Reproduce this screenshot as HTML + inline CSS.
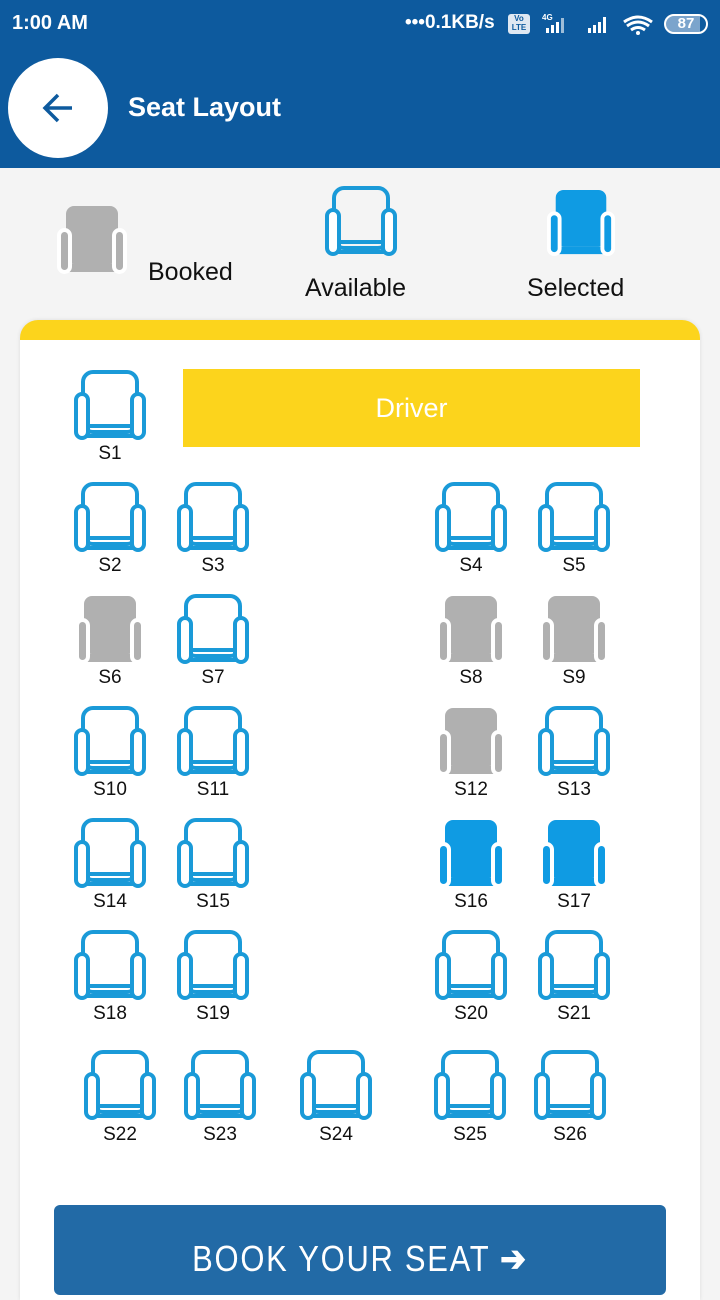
<!DOCTYPE html>
<html><head><meta charset="utf-8"><style>
*{margin:0;padding:0;box-sizing:border-box}
body{width:720px;height:1280px;overflow:hidden;background:#f4f4f4;font-family:"Liberation Sans",Arial,sans-serif;position:relative}
.abs{position:absolute}
.seat{position:absolute;width:72px;height:72px}
.lbl{position:absolute;width:80px;text-align:center;font-size:19px;color:#111}
</style></head><body>
<svg width="0" height="0" style="position:absolute">
<defs>
<g id="av">
<rect x="9" y="2" width="54" height="60" rx="10" fill="none" stroke="#1a9ad8" stroke-width="4"/>
<rect x="14" y="56" width="44" height="10" fill="none" stroke="#1a9ad8" stroke-width="4"/>
<rect x="2" y="24" width="12" height="44" rx="6" fill="#fff" stroke="#1a9ad8" stroke-width="4"/>
<rect x="58" y="24" width="12" height="44" rx="6" fill="#fff" stroke="#1a9ad8" stroke-width="4"/>
</g>
<g id="bk">
<rect x="10" y="2" width="52" height="58" rx="8" fill="#b0b0b0"/>
<rect x="13" y="60" width="46" height="8" fill="#b0b0b0"/>
<rect x="3" y="26" width="11" height="42" rx="5.5" fill="#b0b0b0" stroke="#fff" stroke-width="4"/>
<rect x="58" y="26" width="11" height="42" rx="5.5" fill="#b0b0b0" stroke="#fff" stroke-width="4"/>
</g>
<g id="sl">
<rect x="10" y="2" width="52" height="58" rx="8" fill="#0f9be3"/>
<rect x="13" y="60" width="46" height="8" fill="#0f9be3"/>
<rect x="3" y="26" width="11" height="42" rx="5.5" fill="#0f9be3" stroke="#fff" stroke-width="4"/>
<rect x="58" y="26" width="11" height="42" rx="5.5" fill="#0f9be3" stroke="#fff" stroke-width="4"/>
</g>
</defs></svg>

<div class="abs" style="left:0;top:0;width:720px;height:168px;background:#0d5a9e"></div>
<div class="abs" style="left:12px;top:12px;color:#fff;font-size:20px;font-weight:bold">1:00 AM</div>
<div class="abs" style="left:405px;top:12px;color:#fff;font-size:19px;font-weight:bold">•••0.1KB/s</div>
<div class="abs" style="left:508px;top:14px;width:22px;height:20px;background:#dfe8f2;border-radius:3px;font-size:8px;color:#0d5a9e;text-align:center;line-height:9px;font-weight:bold">Vo<br>LTE</div>
<svg class="abs" style="left:538px;top:12px" width="120" height="24"><text x="4" y="8" font-size="8" fill="#fff" font-family="Liberation Sans" font-weight="bold">4G</text>
<rect x="8" y="16" width="3" height="5" fill="#fff"/><rect x="13" y="13" width="3" height="8" fill="#fff"/><rect x="18" y="10" width="3" height="11" fill="#fff"/><rect x="23" y="6" width="3" height="15" fill="#fff" opacity=".6"/>
<rect x="50" y="16" width="3" height="5" fill="#fff"/><rect x="55" y="13" width="3" height="8" fill="#fff"/><rect x="60" y="10" width="3" height="11" fill="#fff"/><rect x="65" y="5" width="3" height="16" fill="#fff"/>
<path d="M86 10 Q100 0 114 10 M89 14 Q100 6 111 14 M93 18 Q100 13 107 18" stroke="#fff" stroke-width="3" fill="none"/><circle cx="100" cy="21" r="2" fill="#fff"/></svg>
<div class="abs" style="left:664px;top:14px;width:44px;height:20px;border:2px solid #fff;border-radius:10px;color:#fff;font-size:15px;font-weight:bold;text-align:center;line-height:16px;background:linear-gradient(90deg,#7ba4cc 85%,transparent 85%)">87</div>

<div class="abs" style="left:8px;top:58px;width:100px;height:100px;border-radius:50%;background:#fff"></div>
<svg class="abs" style="left:40px;top:90px" width="36" height="36"><path d="M32 18H6M18 5L5 18l13 13" stroke="#0d5a9e" stroke-width="3.5" fill="none"/></svg>
<div class="abs" style="left:128px;top:92px;color:#fff;font-size:27px;font-weight:bold">Seat Layout</div>

<svg class="seat" style="left:56px;top:204px" viewBox="0 0 72 72"><use href="#bk"/></svg>
<div class="abs" style="left:148px;top:258px;font-size:25px;color:#111">Booked</div>
<svg class="seat" style="left:325px;top:186px" viewBox="0 0 72 72"><use href="#av"/></svg>
<div class="abs" style="left:305px;top:274px;font-size:25px;color:#111">Available</div>
<svg class="seat" style="left:546px;top:188px;width:70px;height:70px" viewBox="0 0 72 72"><use href="#sl"/></svg>
<div class="abs" style="left:527px;top:274px;font-size:25px;color:#111">Selected</div>

<div class="abs" style="left:20px;top:320px;width:680px;height:980px;background:#fff;border-radius:18px 18px 0 0;border-top:20px solid #fcd41c;box-shadow:0 0 4px rgba(0,0,0,.1)"></div>
<div class="abs" style="left:183px;top:369px;width:457px;height:78px;background:#fcd41c;color:#fff;font-size:27px;text-align:center;line-height:78px">Driver</div>

<div id="seats"></div>
<div class="abs" style="left:54px;top:1205px;width:612px;height:90px;background:#226aa6;border-radius:6px"></div>
<div class="abs" style="left:54px;top:1238px;width:612px;text-align:center;color:#fff;font-size:36px;letter-spacing:2px;transform:scaleX(0.86)">BOOK YOUR SEAT <b>➔</b></div>
<script>
var s=[[1,110,370,'av'],
[2,110,482,'av'],[3,213,482,'av'],[4,471,482,'av'],[5,574,482,'av'],
[6,110,594,'bk'],[7,213,594,'av'],[8,471,594,'bk'],[9,574,594,'bk'],
[10,110,706,'av'],[11,213,706,'av'],[12,471,706,'bk'],[13,574,706,'av'],
[14,110,818,'av'],[15,213,818,'av'],[16,471,818,'sl'],[17,574,818,'sl'],
[18,110,930,'av'],[19,213,930,'av'],[20,471,930,'av'],[21,574,930,'av'],
[22,120,1050,'av'],[23,220,1050,'av'],[24,336,1050,'av'],[25,470,1050,'av'],[26,570,1050,'av']];
var h='';s.forEach(function(a){var ly=a[0]>21?a[2]+74:a[2]+73;
h+='<svg class="seat" style="left:'+(a[1]-36)+'px;top:'+a[2]+'px" viewBox="0 0 72 72"><use href="#'+a[3]+'"/></svg><div class="lbl" style="left:'+(a[1]-40)+'px;top:'+ly+'px">S'+a[0]+'</div>';});
document.getElementById('seats').innerHTML=h;
</script>
</body></html>
